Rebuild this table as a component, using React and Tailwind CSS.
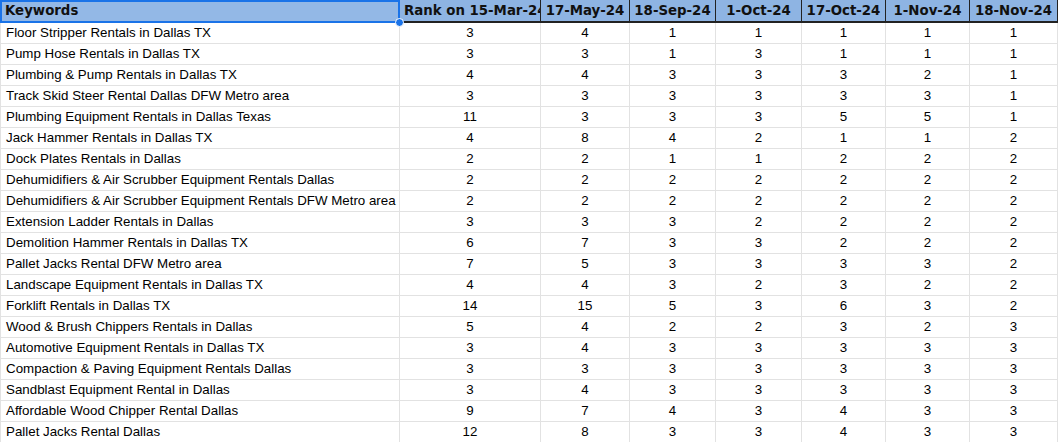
import React from "react";

const rows = [
  ["Floor Stripper Rentals in Dallas TX", 3, 4, 1, 1, 1, 1, 1],
  ["Pump Hose Rentals in Dallas TX", 3, 3, 1, 3, 1, 1, 1],
  ["Plumbing & Pump Rentals in Dallas TX", 4, 4, 3, 3, 3, 2, 1],
  ["Track Skid Steer Rental Dallas DFW Metro area", 3, 3, 3, 3, 3, 3, 1],
  ["Plumbing Equipment Rentals in Dallas Texas", 11, 3, 3, 3, 5, 5, 1],
  ["Jack Hammer Rentals in Dallas TX", 4, 8, 4, 2, 1, 1, 2],
  ["Dock Plates Rentals in Dallas", 2, 2, 1, 1, 2, 2, 2],
  ["Dehumidifiers & Air Scrubber Equipment Rentals Dallas", 2, 2, 2, 2, 2, 2, 2],
  ["Dehumidifiers & Air Scrubber Equipment Rentals DFW Metro area", 2, 2, 2, 2, 2, 2, 2],
  ["Extension Ladder Rentals in Dallas", 3, 3, 3, 2, 2, 2, 2],
  ["Demolition Hammer Rentals in Dallas TX", 6, 7, 3, 3, 2, 2, 2],
  ["Pallet Jacks Rental DFW Metro area", 7, 5, 3, 3, 3, 3, 2],
  ["Landscape Equipment Rentals in Dallas TX", 4, 4, 3, 2, 3, 2, 2],
  ["Forklift Rentals in Dallas TX", 14, 15, 5, 3, 6, 3, 2],
  ["Wood & Brush Chippers Rentals in Dallas", 5, 4, 2, 2, 3, 2, 3],
  ["Automotive Equipment Rentals in Dallas TX", 3, 4, 3, 3, 3, 3, 3],
  ["Compaction & Paving Equipment Rentals Dallas", 3, 3, 3, 3, 3, 3, 3],
  ["Sandblast Equipment Rental in Dallas", 3, 4, 3, 3, 3, 3, 3],
  ["Affordable Wood Chipper Rental Dallas", 9, 7, 4, 3, 4, 3, 3],
  ["Pallet Jacks Rental Dallas", 12, 8, 3, 3, 4, 3, 3],
];

const headers = ["17-May-24", "18-Sep-24", "1-Oct-24", "17-Oct-24", "1-Nov-24", "18-Nov-24"];

export default function App() {
  return (
    <div className="w-[1058px] h-[442px] overflow-hidden bg-white">
      <div className="relative grid grid-cols-[400px_141px_89px_86px_86px_84px_84px_88px] font-['Liberation_Sans',Arial,sans-serif] text-[13.33px] text-black">
        {/* header */}
        <div className="h-[23px] bg-[#93b8e6] border-r border-b-2 border-[#222] pl-[5px] flex items-center font-['DejaVu_Sans',Verdana,sans-serif] font-bold text-[13.33px] text-[#111] whitespace-nowrap overflow-hidden">
          Keywords
        </div>
        <div className="h-[23px] bg-[#8eb4e3] border-r border-b-2 border-[#222] pl-[4px] flex items-center font-['DejaVu_Sans',Verdana,sans-serif] font-bold text-[13.33px] text-[#111] whitespace-nowrap overflow-hidden">
          Rank on 15-Mar-24
        </div>
        {headers.map((h) => (
          <div
            key={h}
            className="h-[23px] bg-[#8eb4e3] border-r border-b-2 border-[#222] flex items-center justify-center font-['DejaVu_Sans',Verdana,sans-serif] font-bold text-[13.33px] text-[#111] whitespace-nowrap overflow-hidden"
          >
            {h}
          </div>
        ))}

        {rows.map((r, i) => (
          <React.Fragment key={i}>
            <div className="h-[21px] border-l border-r border-b border-[#e2e2e2] pl-[5px] flex items-center whitespace-nowrap overflow-hidden">
              {r[0]}
            </div>
            {r.slice(1).map((v, j) => (
              <div
                key={j}
                className="h-[21px] border-r border-b border-[#e2e2e2] flex items-center justify-center"
              >
                {v}
              </div>
            ))}
          </React.Fragment>
        ))}

        {/* selection overlay */}
        <div className="absolute left-0 top-0 w-[400px] h-[23px] border-2 border-[#1a73e8] pointer-events-none" />
        <div className="absolute left-[395px] top-[18px] w-[9px] h-[9px] rounded-full bg-[#1a73e8] border border-white pointer-events-none" />
      </div>
    </div>
  );
}
